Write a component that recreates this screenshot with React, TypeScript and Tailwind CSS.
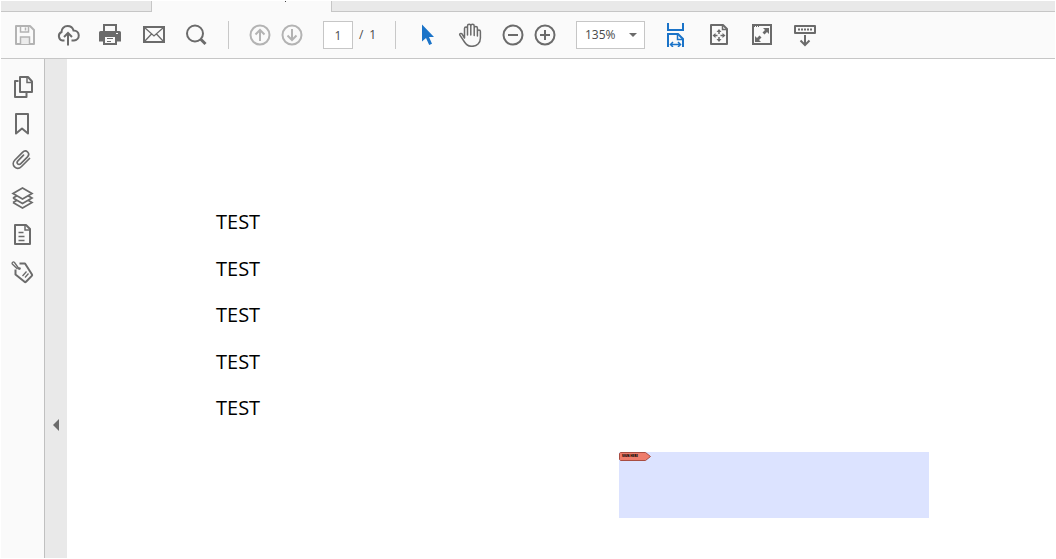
import { useState } from "react";
import type { ReactNode } from "react";

interface IconButtonProps {
  label: string;
  children: ReactNode;
  disabled?: boolean;
  active?: boolean;
}

function IconButton({ label, children, disabled, active }: IconButtonProps) {
  const color = disabled ? "text-[#b3b3b3]" : active ? "text-[#1a73c8]" : "text-[#6b6b6b]";
  return (
    <button type="button" aria-label={label} title={label} disabled={disabled} className={`h-6 w-6 shrink-0 ${color}`}>
      <svg
        viewBox="0 0 24 24"
        width="24"
        height="24"
        fill="none"
        stroke="currentColor"
        strokeWidth="2"
        className="block"
        aria-hidden="true"
      >
        {children}
      </svg>
    </button>
  );
}

function Separator() {
  return <div className="h-7 w-px shrink-0 bg-[#c8c8c8]" />;
}

function TabStrip() {
  return (
    <div className="flex h-[11px] shrink-0 bg-[#e9e9e9]">
      <div className="w-[151px] shrink-0 border-r border-b border-[#c6c6c6]" />
      <div className="flex w-[179px] shrink-0 justify-center bg-[#fafafa] pl-[88px]">
        <span className="h-px w-px bg-[#444444]" />
      </div>
      <div className="grow border-b border-l border-[#c6c6c6]" />
    </div>
  );
}

function Toolbar() {
  const [page, setPage] = useState("1");
  const [zoom, setZoom] = useState("135%");

  return (
    <header className="flex h-[47px] shrink-0 items-center gap-[19px] border-b border-[#c6c6c6] bg-[#fafafa] pl-3">
      <IconButton label="Save" disabled>
        <path d="M3 3h14l4 4v14H3z" strokeLinejoin="round" />
        <path d="M7.500 3v6h8V3M12.500 4.500v3" strokeWidth="1.500" />
        <path d="M7.500 21v-7h9v7" fill="#ececec" strokeWidth="1.500" />
      </IconButton>
      <IconButton label="Share">
        <path d="M8.500 17.500H6.500a4.500 4.500 0 0 1-1-8.500c0-3.500 2.700-6 6-6 3 0 5.300 1.800 6 4.500a5 5 0 0 1 .5 10H15.500" />
        <path d="M12 22.500V11M8 14l4-4 4 4" />
      </IconButton>
      <IconButton label="Print">
        <path d="M4 1h14v7h2.500a1.500 1.500 0 0 1 1.500 1.500v9h-4V22H4v-3.500H0v-9A1.500 1.500 0 0 1 1.500 8H4z" fill="currentColor" stroke="none" />
        <path d="M6 3h10v5H6zM6 14h10v6H6z" fill="#fafafa" stroke="none" />
        <path d="M8 15.500h6M8 18.500h4" strokeWidth="1" />
        <path d="M17 10.500h2" stroke="#fafafa" strokeWidth="1" />
      </IconButton>
      <IconButton label="Email">
        <path d="M2 4h20v15H2z" />
        <path d="M2.500 4.500L12 13l9.500-8.500M2.500 18.500l7-7.500M21.500 18.500l-7-7.500" strokeWidth="1.300" />
      </IconButton>
      <IconButton label="Find">
        <circle cx="10" cy="10.500" r="8" />
        <path d="M15.500 16l5 5" strokeWidth="3" />
      </IconButton>

      <Separator />

      <div className="flex gap-2">
        <IconButton label="Previous page" disabled>
          <circle cx="12" cy="12" r="9.500" />
          <path d="M12 18V7M7.500 11.500L12 7l4.500 4.500" />
        </IconButton>
        <IconButton label="Next page" disabled>
          <circle cx="12" cy="12" r="9.500" />
          <path d="M12 6v11M7.500 12.500L12 17l4.500-4.500" />
        </IconButton>
      </div>

      <div className="flex items-center gap-1.5 text-xs text-[#4a4a4a]">
        <input
          aria-label="Page number"
          value={page}
          onChange={(e) => setPage(e.target.value)}
          className="h-7 w-[30px] border border-[#c6c6c6] bg-white text-center outline-none"
        />
        <div className="flex w-[17px] justify-between">
          <span>/</span>
          <span>1</span>
        </div>
      </div>

      <Separator />

      <IconButton label="Select" active>
        <path d="M7 1.500v17l4-3.500 3.200 7 2.800-1.200-3-6.800h5z" fill="currentColor" stroke="none" />
      </IconButton>
      <IconButton label="Pan">
        <path
          d="M6.500 15V5.500a1.500 1.500 0 0 1 3 0V12V3a1.500 1.500 0 0 1 3.300 0v9V3a1.500 1.500 0 0 1 3.400 0v9.500V5a1.500 1.500 0 0 1 3.200 0v8V8.500a1.500 1.500 0 0 1 3 0V15c0 5-3.400 8.300-8.400 8.300-3.500 0-5.700-1.300-7.500-4.300l-4.600-6.800c-.7-1.200.8-2.300 1.900-1.500z"
          strokeWidth="1.500"
          strokeLinejoin="round"
        />
      </IconButton>
      <div className="flex gap-2">
        <IconButton label="Zoom out">
          <circle cx="12" cy="12" r="9.500" />
          <path d="M7 12h10" />
        </IconButton>
        <IconButton label="Zoom in">
          <circle cx="12" cy="12" r="9.500" />
          <path d="M7 12h10M12 7v10" />
        </IconButton>
      </div>

      <div className="relative shrink-0">
        <select
          aria-label="Zoom level"
          value={zoom}
          onChange={(e) => setZoom(e.target.value)}
          className="h-7 w-[69px] appearance-none border border-[#c6c6c6] bg-white pl-2 text-xs text-[#4a4a4a] outline-none"
        >
          <option>100%</option>
          <option>135%</option>
          <option>150%</option>
        </select>
        <svg viewBox="0 0 8 4" width="8" height="4" className="pointer-events-none absolute top-3 right-2" aria-hidden="true">
          <path d="M0 0h8L4 4z" fill="#6b6b6b" />
        </svg>
      </div>

      <IconButton label="Fit width" active>
        <path d="M4 0v7h15V0" />
        <path d="M4 24V11h10l5 5v8" />
        <path d="M13.500 11v5.500H19" strokeWidth="1.500" />
        <path d="M7 21.500h9M9 19l-2.500 2.500L9 24M14 19l2.500 2.500L14 24" strokeWidth="1.500" />
      </IconButton>
      <IconButton label="Fit page">
        <path d="M4 2h12l4 4v15H4z" strokeLinejoin="round" />
        <path d="M15.500 2v4.500H20" strokeWidth="1.500" />
        <path d="M12 8v3M12 14v3M7.500 12.500h3M13.500 12.500h3" strokeWidth="1.500" />
        <path d="M12 6l2.500 3h-5zM12 19l2.500-3h-5zM5.500 12.500l3-2.500v5zM18.500 12.500l-3-2.500v5z" fill="currentColor" stroke="none" />
      </IconButton>
      <IconButton label="Full screen">
        <path d="M3 2h18v19H3z" />
        <path d="M4 3.500h5" strokeWidth="1" strokeDasharray="1 1" />
        <path d="M13 5h6v6l-2-2-2.500 2.500-2-2L15 7zM11 19H5v-6l2 2 2.500-2.500 2 2L9 17z" fill="currentColor" stroke="none" />
      </IconButton>
      <IconButton label="Show reading tools">
        <path d="M2 3h20v7H2z" strokeLinejoin="round" />
        <path d="M5 6.500h14" strokeDasharray="2 1" />
        <path d="M12 12v10M7.500 17.500L12 22l4.500-4.500" />
      </IconButton>
    </header>
  );
}

function SideRail() {
  return (
    <nav className="flex w-11 shrink-0 flex-col gap-[13px] border-r border-[#c0c0c0] bg-[#fafafa] pt-4 pl-2.5">
      <IconButton label="Page thumbnails">
        <path d="M7.500 6H4v16h11.500v-4" strokeLinejoin="round" />
        <path d="M9 2h8l4 4.500V17H9z" strokeLinejoin="round" />
        <path d="M16 2v5.500h5" strokeWidth="1.500" />
      </IconButton>
      <IconButton label="Bookmarks">
        <path d="M5 2h12v19.500l-6-5-6 5z" strokeLinejoin="round" />
      </IconButton>
      <IconButton label="Attachments">
        <path
          d="M18.500 9.500l-8 8c-2.300 2.300-5 2.200-6.900.4-1.900-1.900-1.800-4.800.3-6.900l7.600-7.700c1.600-1.600 3.700-1.700 5.100-.3s1.300 3.500-.3 5.100l-6.500 6.500c-1 1-2.300 1-3.100.2-.8-.9-.7-2 .2-2.900l5.600-5.700"
          strokeWidth="1.700"
          strokeLinecap="round"
        />
      </IconButton>
      <IconButton label="Layers">
        <path d="M2 16.500L11.500 22l9.500-5.500-4-2.300M6 14.200l-4 2.300" strokeWidth="1.700" />
        <path d="M2 12l9.500 5.500L21 12l-4-2.300M6 9.700L2 12" strokeWidth="1.700" />
        <path d="M2 7.500L11.500 2 21 7.500 11.500 13z" fill="#fafafa" strokeWidth="1.700" />
      </IconButton>
      <IconButton label="Content">
        <path d="M4 2h11l4 4v15H4z" strokeLinejoin="round" />
        <path d="M14 2v5h5" strokeWidth="1.500" />
        <path d="M7.500 9.500h5M7.500 13.500h6M7.500 17.500h6" strokeWidth="1.500" />
      </IconButton>
      <IconButton label="Tags">
        <path d="M8.500 3.500H14L21 14.500c.3.500.2 1-.2 1.400L15 21.700c-.5.500-1 .5-1.500.1L4.500 14.500V9.500" strokeLinejoin="round" />
        <path d="M8.500 9.500L3.500 2.500c-1.200-1.300-3 0-2.200 1.500L6.500 9" strokeWidth="1.300" />
        <circle cx="8.500" cy="8.500" r="1.300" fill="currentColor" stroke="none" />
        <path d="M11.500 16l4-4.500M14 17.500l3.500-4" strokeWidth="1.300" />
      </IconButton>
    </nav>
  );
}

function SignatureField() {
  return (
    <div className="relative mt-[30px] ml-[552px] h-[66px] w-[310px] bg-[#dce3ff]">
      <div className="absolute top-0 left-0 h-[9px] w-8">
        <svg viewBox="0 0 32 9" width="32" height="9" className="absolute inset-0" aria-hidden="true">
          <path d="M1.500.500H26.500L31.500 4.500L26.500 8.500H1.500L.500 7.500V1.500z" fill="#ee7c6b" stroke="#a84d42" />
        </svg>
        <span className="absolute top-[3px] left-[3px] text-[3px] leading-[3px] font-extrabold whitespace-nowrap text-black">
          SIGN HERE
        </span>
      </div>
    </div>
  );
}

export default function App() {
  const lines = ["TEST", "TEST", "TEST", "TEST", "TEST"];

  return (
    <div className="flex min-h-screen flex-col bg-white p-px font-['Open_Sans','Noto_Sans',sans-serif]">
      <TabStrip />
      <Toolbar />
      <div className="flex grow">
        <SideRail />
        <div className="w-[22px] shrink-0 bg-[#e9e9e9] pt-[360px]">
          <button type="button" aria-label="Collapse pane" className="flex h-3 w-full items-center justify-center">
            <svg viewBox="0 0 6 12" width="6" height="12" aria-hidden="true">
              <path d="M6 0v12L0 6z" fill="#6b6b6b" />
            </svg>
          </button>
        </div>
        <main className="grow bg-white pt-[149px]">
          <div className="flex h-[214px] flex-col justify-between pl-[149px] text-xl text-black">
            {lines.map((line, i) => (
              <p key={i}>{line}</p>
            ))}
          </div>
          <SignatureField />
        </main>
      </div>
    </div>
  );
}
